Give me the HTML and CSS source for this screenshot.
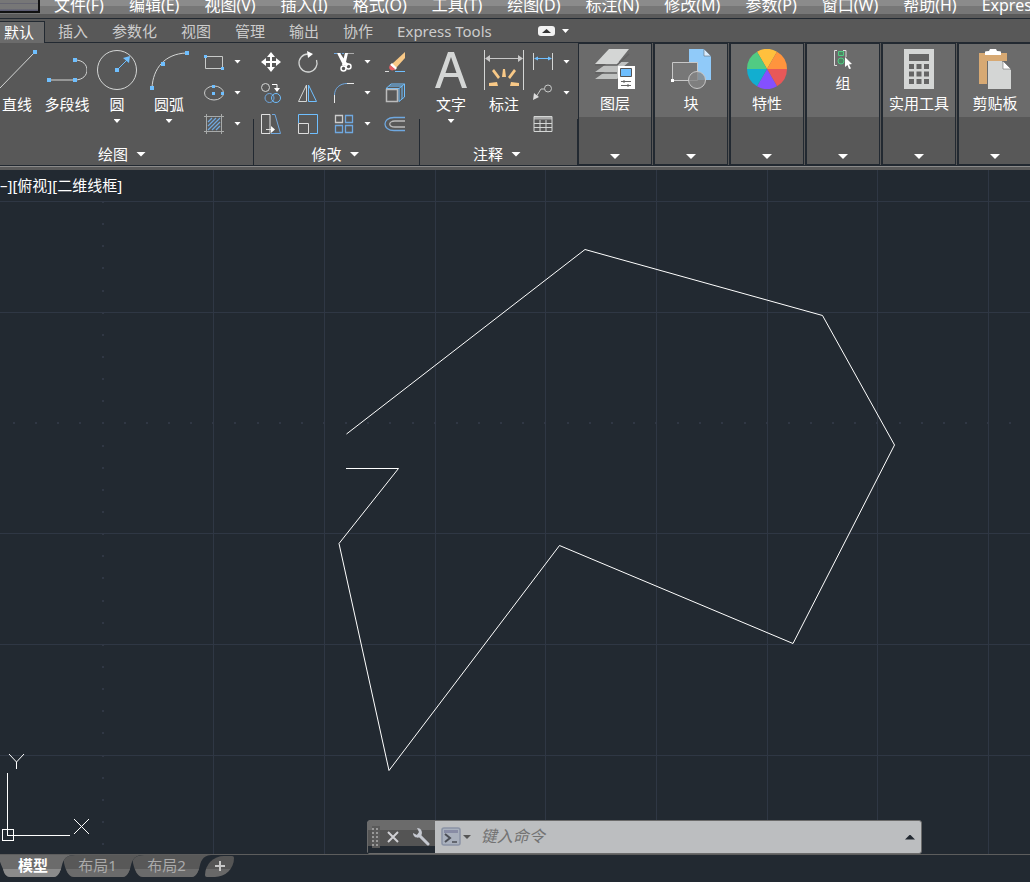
FILE: index.html
```html
<!DOCTYPE html>
<html lang="zh-CN">
<head>
<meta charset="utf-8">
<title>CAD</title>
<link rel="stylesheet" href="styles.css">
</head>
<body>
<div class="app">
  <nav class="menubar" aria-label="菜单">
    <span class="menu-edge"></span>
    <button>文件(F)</button><button>编辑(E)</button><button>视图(V)</button><button>插入(I)</button><button>格式(O)</button><button>工具(T)</button><button>绘图(D)</button><button>标注(N)</button><button>修改(M)</button><button>参数(P)</button><button>窗口(W)</button><button>帮助(H)</button><button>Express</button>
  </nav>
  <nav class="ribbon-tabs" aria-label="功能区选项卡">
    <button class="active">默认</button><button>插入</button><button>参数化</button><button>视图</button><button>管理</button><button>输出</button><button>协作</button><button>Express Tools</button>
    <button class="collapse" aria-label="最小化功能区"><svg width="31" height="12" viewBox="0 0 31 12"><rect x="0" y="1" width="17" height="10" rx="3" fill="#f2f2f2"/><path d="M4 8h9L8.500 4z" fill="#333"/><path d="M24 4h7l-3.500 4z" fill="#fff"/></svg></button>
  </nav>
  <div class="ribbon">
    <section class="panel draw">
      <div class="tools">
        <button class="large"><svg viewBox="0 0 40 40"><path d="M3 38L38 2" stroke="#d4d6d5"/><path d="M36 0h4v4h-4z" fill="#6fbfff"/></svg><span>直线</span></button>
        <button class="large"><svg viewBox="0 0 40 40"><path d="M2 30h26M28 10c8 0 12 5 12 10s-4 10-12 10" stroke="#d4d6d5"/><path d="M0 28h4v4H0zM26 28h4v4h-4zM26 8h4v4h-4z" fill="#6fbfff"/></svg><span>多段线</span></button>
        <button class="large"><svg viewBox="0 0 40 40"><circle cx="20" cy="20" r="19.500" stroke="#d4d6d5"/><path d="M20 20L31 9" stroke="#6fbfff"/><path d="M18 18h4v4h-4zM33 6l-1 7-6-5z" fill="#6fbfff"/></svg><span>圆</span><i class="caret"></i></button>
        <button class="large"><svg viewBox="0 0 40 40"><path d="M3 38C4 18 16 4 37 3" stroke="#d4d6d5"/><path d="M1 36h4v4H1zM12 12h4v4h-4zM36 1h4v4h-4z" fill="#6fbfff"/></svg><span>圆弧</span><i class="caret"></i></button>
        <div class="small-grid">
          <button aria-label="矩形"><svg viewBox="0 0 20 20"><path d="M1.500 4.500h17v12h-17z" stroke="#c8cac9"/><path d="M0 3h3v3H0zM17 15h3v3h-3z" fill="#6fbfff"/></svg></button><i class="caret"></i>
          <button aria-label="椭圆"><svg viewBox="0 0 20 20"><ellipse cx="10" cy="10" rx="9.500" ry="7" stroke="#c8cac9"/><path d="M8 2h3v3H8zM8 9h3v3H8zM17 9h3v3h-3z" fill="#6fbfff"/></svg></button><i class="caret"></i>
          <button aria-label="图案填充"><svg viewBox="0 0 20 20"><path d="M2.500 0v20M17.500 0v20M0 2.500h20M0 17.500h20" stroke="#a8aaa9"/><path d="M4 8l4-4M4 12l8-8M4 16L16 4M8 16l8-8M12 16l4-4" stroke="#6fa8e0" stroke-width="1.300"/></svg></button><i class="caret"></i>
        </div>
      </div>
      <button class="panel-title">绘图<i class="caret wide"></i></button>
    </section>
    <section class="panel modify">
      <div class="tools">
        <div class="small-grid">
          <button aria-label="移动"><svg viewBox="0 0 20 20"><path d="M10 3v14M3 10h14" stroke="#fff" stroke-width="2"/><path d="M10 0l4 5H6zM10 20l4-5H6zM0 10l5-4v8zM20 10l-5-4v8z" fill="#fff"/></svg></button>
          <button aria-label="旋转"><svg viewBox="0 0 20 20"><path d="M10 2a9 9 0 1 0 8.500 6" stroke="#d4d6d5" stroke-width="1.300"/><path d="M9 -1l6 3-5 4z" fill="#fff"/></svg></button>
          <button aria-label="修剪"><svg viewBox="0 0 20 20"><path d="M0 1.500h10" stroke="#6fa8e0" stroke-dasharray="3 1"/><path d="M13 1.500h7" stroke="#aaa"/><path d="M3 1l3 0 6 9 3 2-2 2-4-1zM11 1h3l-2 9-2 4-2-1z" fill="#fff"/><circle cx="9.500" cy="16.500" r="2.500" stroke="#fff" stroke-width="1.500"/><circle cx="14.500" cy="14.500" r="2.500" stroke="#fff" stroke-width="1.500"/></svg></button><i class="caret"></i>
          <button aria-label="删除"><svg viewBox="0 0 20 20"><path d="M0 19.500h4" stroke="#ddd"/><path d="M10 19.500h10" stroke="#6fbfff"/><path d="M7 12L20 0v6l-9 10z" fill="#f9c987"/><path d="M7 11l5 5-2 2-5-5z" fill="#fff"/><path d="M5 13l5 4c-2 3-8 1-5-4z" fill="#e85f62"/></svg></button>
          <button aria-label="复制"><svg viewBox="0 0 20 20"><circle cx="4.500" cy="4.500" r="4" stroke="#d4d6d5"/><path d="M11 1.500h5v4" stroke="#fff"/><path d="M13 5h6l-3 4z" fill="#fff"/><circle cx="8.500" cy="15" r="4.500" stroke="#6fa8e0"/><circle cx="15" cy="15" r="4.500" stroke="#6fbfff"/></svg></button>
          <button aria-label="镜像"><svg viewBox="0 0 20 20"><path d="M8.500 2v16.500h-8z" stroke="#d4d6d5"/><path d="M10.500 2v16.500h8z" stroke="#6fbfff"/></svg></button>
          <button aria-label="圆角"><svg viewBox="0 0 20 20"><path d="M.500 12v8M13 .500h7" stroke="#e8e8e8"/><path d="M.500 12C.500 5 6 .500 13 .500" stroke="#6fa8e0"/></svg></button><i class="caret"></i>
          <button aria-label="分解"><svg viewBox="0 0 20 20"><path d="M1 5.500L6 1h13.500v13L14 18.500M14 5.500L19.500 1M1 5.500h13v13M4 3h13v13" stroke="#6fbfff"/><path d="M1.500 6.500h11v12h-11z" stroke="#bbb" stroke-width="1.500"/></svg></button>
          <button aria-label="拉伸"><svg viewBox="0 0 20 20"><path d="M9 .500H.500v19H9zM5 15.500h7" stroke="#e0e0e0"/><path d="M10 12l4 3.500-4 3.500z" fill="#fff"/><path d="M11 .500h3l5.500 19H10" stroke="#6fa8e0"/></svg></button>
          <button aria-label="缩放"><svg viewBox="0 0 20 20"><path d="M.500 9V.500h19v19H12" stroke="#6fbfff"/><path d="M.500 9.500h10v10H.500z" stroke="#ddd"/></svg></button>
          <button aria-label="阵列"><svg viewBox="0 0 20 20"><path d="M1.500 1.500h7v7h-7z" stroke="#ccc" stroke-width="1.300"/><path d="M11.500 1.500h7v7h-7zM1.500 11.500h7v7h-7zM11.500 11.500h7v7h-7z" stroke="#6fa8e0" stroke-width="1.300"/></svg></button><i class="caret"></i>
          <button aria-label="偏移"><svg viewBox="0 0 20 20"><path d="M20 3.500H9C-3 3.500-3 16.500 9 16.500h11" stroke="#6fa8e0" stroke-width="1.300"/><path d="M20 7H10c-7 0-7 6 0 6h10" stroke="#bbb" stroke-width="1.300"/></svg></button>
        </div>
      </div>
      <button class="panel-title">修改<i class="caret wide"></i></button>
    </section>
    <section class="panel annotate">
      <div class="tools">
        <button class="large"><svg viewBox="0 0 40 40"><path d="M4 38L17 2h6l13 36h-5l-4-11H13L9 38zM14.500 23h11L20 7z" fill="#d4d6d5" fill-rule="evenodd"/></svg><span>文字</span><i class="caret"></i></button>
        <button class="large"><svg viewBox="0 0 40 40"><path d="M.500 0v40M39.500 0v40" stroke="#d4d6d5"/><path d="M2 8.500h36" stroke="#c8c8c8"/><path d="M1 8.500L6 5v7zM39 8.500L34 5v7z" fill="#c8c8c8"/><path d="M18 27l1-8h2l1 8zM8 21l2-2 6 8-2 2zM32 21l-2-2-6 8 2 2zM5 36v-3l8-1 1 4zM35 36v-3l-8-1-1 4z" fill="#f9c987"/></svg><span>标注</span></button>
        <div class="small-grid">
          <button aria-label="线性"><svg viewBox="0 0 20 20"><path d="M.500 1v17M19.500 1v17" stroke="#d4d6d5"/><path d="M2 6.500h16" stroke="#6fbfff"/><path d="M1 6.500l4-2v4zM19 6.500l-4-2v4z" fill="#6fbfff"/></svg></button><i class="caret"></i>
          <button aria-label="引线"><svg viewBox="0 0 20 20"><circle cx="15" cy="5.500" r="3.500" stroke="#c8cac9"/><path d="M11.500 6H8l-5 8" stroke="#c8cac9"/><path d="M0 17l1-7 5 4z" fill="#ddd"/></svg></button><i class="caret"></i>
          <button aria-label="表格"><svg viewBox="0 0 20 20"><path d="M1 4h18" stroke="#aaa" stroke-width="3"/><path d="M1 2.500h18v15H1zM1 9.500h18M1 13.500h18M7 6v12M13 6v12" stroke="#d4d6d5"/></svg></button>
        </div>
      </div>
      <button class="panel-title">注释<i class="caret wide"></i></button>
    </section>
    <section class="folded">
      <button class="face"><svg viewBox="0 0 40 40"><path d="M14 20h20L22 30H0zM14 13h20L22 23H0z" fill="#bfc1c0"/><path d="M14 0h20L22 15H0z" fill="#d4d6d5"/><path d="M0 16h22L34 5M0 24h22" stroke="#606060" stroke-width="1.500"/><path d="M23 17h17v23H23z" fill="#fff"/><path d="M25.500 19.500h11v8h-11z" fill="#6fbfff" stroke="#555"/><path d="M26 32.500h10M26 36.500h10M29 31v3M33 35v3" stroke="#666"/></svg><span>图层</span></button>
      <button class="more" aria-label="图层面板"><i class="caret wide"></i></button>
    </section>
    <section class="folded">
      <button class="face"><svg viewBox="0 0 40 40"><path d="M18 0h15l7 7v24H18z" fill="#90caf9"/><path d="M33 0v7h7z" fill="#d8ecff" stroke="#555" stroke-width=".500"/><path d="M1.500 13.500h25v18h-25z" fill="#777" stroke="#c8c8c8"/><circle cx="26" cy="31" r="8.500" fill="#858585" fill-opacity=".800" stroke="#c8c8c8"/><path d="M0 30h3v3H0z" fill="#fff"/></svg><span>块</span></button>
      <button class="more" aria-label="块面板"><i class="caret wide"></i></button>
    </section>
    <section class="folded">
      <button class="face"><svg viewBox="0 0 40 40"><path d="M20 20L10 2.700A20 20 0 0 1 30 2.700z" fill="#ffc03d"/><path d="M20 20L30 2.700A20 20 0 0 1 40 20z" fill="#ff943d"/><path d="M20 20h20a20 20 0 0 1-10 17.300z" fill="#e85858"/><path d="M20 20l10 17.300a20 20 0 0 1-20 0z" fill="#8450ff"/><path d="M20 20L10 37.300A20 20 0 0 1 0 20z" fill="#12aed0"/><path d="M20 20H0A20 20 0 0 1 10 2.700z" fill="#51cb83"/></svg><span>特性</span></button>
      <button class="more" aria-label="特性面板"><i class="caret wide"></i></button>
    </section>
    <section class="folded">
      <button class="face short"><svg viewBox="0 0 20 20"><path d="M4 1.500H1.500v15H4M10 1.500h3V8" stroke="#ddd"/><path d="M5.500 2.500h5v4h-5z" stroke="#51cb83" fill="#4c8562"/><circle cx="8" cy="12" r="3" stroke="#51cb83" fill="#4c8562"/><path d="M12 8l7 7-3 .500 2 4-2 .500-1.500-4L12 18z" fill="#fff"/></svg><span>组</span></button>
      <button class="more" aria-label="组面板"><i class="caret wide"></i></button>
    </section>
    <section class="folded">
      <button class="face"><svg viewBox="0 0 40 40"><path d="M5 0h30v40H5z" fill="#d4d6d5"/><path d="M10 5h20v7H10zM10 15h5v5h-5zM17.500 15h5v5h-5zM25 15h5v5h-5zM10 22.500h5v5h-5zM17.500 22.500h5v5h-5zM25 22.500h5v5h-5zM10 30h5v5h-5zM17.500 30h5v5h-5zM25 30h5v5h-5z" fill="#656565"/></svg><span>实用工具</span></button>
      <button class="more" aria-label="实用工具面板"><i class="caret wide"></i></button>
    </section>
    <section class="folded">
      <button class="face"><svg viewBox="0 0 40 40"><path d="M4 4h28v8H12v23H4z" fill="#d7a973"/><path d="M10 6V3q0-1 4-1l1-2h6l1 2q4 0 4 1v3z" fill="#fff"/><path d="M13 12h14l9 9v19H13z" fill="#d4d6d5"/><path d="M28 12v8h8z" fill="#fff" stroke="#555" stroke-width=".500"/></svg><span>剪贴板</span></button>
      <button class="more" aria-label="剪贴板面板"><i class="caret wide"></i></button>
    </section>
  </div>
  <main class="canvas">
    <svg class="drawing" shape-rendering="crispEdges">
      <path d="M213.500 0v684M324.500 0v684M435.500 0v684M545.500 0v684M656.500 0v684M767.500 0v684M877.500 0v684M988.500 0v684M0 31.500h1030M0 142.500h1030M0 363.500h1030M0 474.500h1030M0 585.500h1030" stroke="#2f3744"/>
      <path d="M13 253h1017M103 31v653" stroke="#303744" stroke-width="2" stroke-dasharray="2 20.140"/>
      <g stroke="#fff" fill="none" shape-rendering="geometricPrecision">
        <path d="M346.500 264L585 79.500 822.500 145.500 894.500 275 793 473.500 559.500 375.500 389 600.500 339 373.500 398.500 298.500H346"/>
      </g>
      <path d="M7.500 603v62H70M2.500 659.500h11v11h-11z" stroke="#fff" fill="none"/>
      <path d="M9 584l7.500 8 7.500-8M16.500 592v7M74 649l15 15M89 649l-15 15" stroke="#fff" fill="none" shape-rendering="geometricPrecision"/>
    </svg>
    <div class="view-label"><span>–][俯视][二维线框]</span></div>
    <form class="command">
      <div class="command-tools">
        <span class="grip"></span>
        <button type="button" aria-label="关闭"><svg width="12" height="12" viewBox="0 0 12 12"><path d="M1 1l10 10M11 1L1 11" stroke="#d0d0d4" stroke-width="2"/></svg></button>
        <button type="button" aria-label="自定义"><svg width="18" height="18" viewBox="0 0 18 18"><path d="M7 7l9 9" stroke="#c5c8d0" stroke-width="3" stroke-linecap="round"/><path d="M5 0c5 0 6 5 4 8-2 3-8 2-8-3l4 2 2-3z" fill="#c5c8d0"/></svg></button>
      </div>
      <button type="button" class="prompt" aria-label="最近使用的命令"><svg width="30" height="20" viewBox="0 0 30 20"><rect x="1" y="1" width="18" height="17" rx="2" fill="#a9b0bd" stroke="#8a93a5" stroke-width="1.500"/><path d="M3 3h14v3H3z" fill="#888ca5"/><path d="M4 7l5 4-5 4" stroke="#4b4e55" stroke-width="2"/><path d="M11 15h5" stroke="#4b4e55" stroke-width="1.500"/><path d="M22 8h8l-4 4z" fill="#555"/></svg></button>
      <input type="text" placeholder="键入命令" aria-label="键入命令">
      <button type="button" class="history" aria-label="历史记录"><i class="caret wide up"></i></button>
    </form>
  </main>
  <nav class="layouts" aria-label="布局">
    <button class="active"><svg viewBox="0 0 80 22" preserveAspectRatio="none"><path class="tab-top" d="M0 0C6 3 6 8 9 14Q11 22 16 22H60Q64 22 67 14C69 6 70 1 79 0z"/><path class="tab-low" d="M9 14Q11 22 16 22H60Q64 22 67 14z"/></svg><span>模型</span></button>
    <button><svg viewBox="0 0 80 22" preserveAspectRatio="none"><path class="tab-top" d="M12 0C4 0 0 4 1 8Q4 22 11 22H60Q64 22 67 14C69 6 70 1 79 0z"/><path class="tab-low" d="M3 14Q6 22 11 22H60Q64 22 67 14z"/></svg><span>布局1</span></button>
    <button><svg viewBox="0 0 80 22" preserveAspectRatio="none"><path class="tab-top" d="M12 0C4 0 0 4 1 8Q4 22 11 22H60Q64 22 67 14C69 6 70 1 79 0z"/><path class="tab-low" d="M3 14Q6 22 11 22H60Q64 22 67 14z"/></svg><span>布局2</span></button>
    <button class="add" aria-label="新建布局"><svg viewBox="0 0 10 10"><path d="M5 0v10M0 5h10" stroke="#c8c8c8" stroke-width="2"/></svg></button>
  </nav>
</div>
</body>
</html>
```
FILE: styles.css
```css
* { box-sizing: border-box; }
body {
  margin: 0;
  background: #222931;
  color: #fff;
  font: 15px/20px "Noto Sans", "Noto Sans CJK SC", sans-serif;
}
button {
  margin: 0;
  padding: 0;
  border: 0;
  background: none;
  color: inherit;
  font: inherit;
  white-space: nowrap;
}
svg { display: block; fill: none; flex: none; }
.app {
  display: flex;
  flex-direction: column;
  height: 100vh;
  overflow: hidden;
}
.menubar {
  display: flex;
  gap: 25px;
  height: 19px;
  flex: none;
  overflow: hidden;
  background: linear-gradient(#8b8b8b 6px, #777 6px, #777 14px, #5a5a5a 14px);
  border-bottom: 1px solid #222931;
}
.menubar button { height: 10px; font-size: 16px; line-height: 10px; flex: none; }
.menu-edge {
  width: 40px;
  height: 13px;
  margin-right: -11px;
  flex: none;
  background: linear-gradient(#777 3px, #55556a 3px, #777 4px, #777 9px, #5a5a70 10px);
  border-right: 2px solid #111;
  border-bottom: 2px solid #111;
}
.ribbon-tabs {
  display: flex;
  height: 24px;
  flex: none;
  padding-top: 2px;
  background: #585858;
  border-bottom: 1px solid #222931;
  color: #ccc;
}
.ribbon-tabs button { height: 20px; line-height: 20px; padding: 0 12px; }
.ribbon-tabs .active {
  height: 22px;
  padding: 0 10px 2px 4px;
  margin-right: 1px;
  background: #6b6b6b;
  border-top: 1px solid #222931;
  border-right: 1px solid #222931;
  color: #fff;
}
.ribbon-tabs .collapse { padding: 0 34px; }
.ribbon {
  display: flex;
  height: 123px;
  flex: none;
  overflow: hidden;
  border-bottom: 1px solid #222931;
}
.panel {
  display: flex;
  flex-direction: column;
  flex: none;
  position: relative;
  background: #585858;
}
.panel::after {
  content: "";
  position: absolute;
  right: 0;
  bottom: 0;
  width: 1px;
  height: 46px;
  background: #222931;
}
.tools { display: flex; flex: 1; padding-top: 3px; }
.large {
  display: flex;
  flex-direction: column;
  align-items: center;
  padding-top: 4px;
  flex: none;
}
.large svg { width: 40px; height: 40px; }
.large span { margin: 4px 0 5px; }
.draw .large { width: 34px; }
.draw .large:nth-child(2) { width: 66px; }
.draw .large:nth-child(4) { width: 70px; }
.annotate .large { width: 62px; }
.annotate .large:nth-child(2) { width: 44px; margin-right: 7px; }
.draw { width: 254px; }
.modify { width: 166px; padding-left: 7px; }
.annotate { width: 158px; }
.small-grid {
  display: grid;
  grid-template-columns: 30px 8px;
  grid-auto-rows: 31px;
  align-items: center;
  align-content: start;
}
.modify .small-grid { grid-template-columns: 37px 36px 30px 21px 20px; }
.small-grid svg { width: 20px; height: 20px; overflow: visible; }
.caret {
  display: block;
  width: 7px;
  height: 4px;
  background: #fff;
  clip-path: polygon(0 0, 100% 0, 50% 100%);
  flex: none;
}
.caret.wide { width: 10px; height: 5px; }
.caret.up { background: #222931; clip-path: polygon(50% 0, 100% 100%, 0 100%); }
.panel-title {
  display: flex;
  align-items: center;
  justify-content: center;
  gap: 8px;
  height: 22px;
  padding-right: 10px;
}
.annotate .panel-title { padding-right: 4px; }
.folded {
  display: flex;
  flex-direction: column;
  flex: none;
  width: 76px;
  padding: 1px 2px 1px 1px;
  border-right: 1px solid #222931;
  background: linear-gradient(90deg, #222931 74px, #585858 74px);
}
.face {
  display: flex;
  flex-direction: column;
  align-items: center;
  height: 73px;
  padding-top: 5px;
  background: #6b6b6b;
}
.face svg { width: 40px; height: 40px; }
.face.short svg { width: 20px; height: 20px; }
.face span { margin-top: 4px; }
.more {
  display: flex;
  flex: 1;
  align-items: flex-end;
  justify-content: center;
  padding-bottom: 5px;
  background: #585858;
}
.canvas {
  flex: 1;
  min-height: 0;
  position: relative;
  border-top: 4px solid #5a5a5a;
  border-bottom: 1px solid #5d5d5d;
}
.canvas::before {
  content: "";
  position: absolute;
  inset: -4px 0 auto;
  height: 1px;
  background: #8a8a8a;
}
.drawing { position: absolute; inset: 0; width: 100%; height: 100%; }
.view-label { position: absolute; left: 0; top: 5px; }
.command {
  position: absolute;
  left: 36%;
  right: 10%;
  bottom: 0;
  display: flex;
  align-items: center;
  height: 34px;
  margin: 0 5px 0 -4px;
  background: #bcbec0;
  border: 1px solid #6b6b6b;
  border-radius: 3px;
}
.command-tools {
  display: flex;
  align-items: center;
  justify-content: space-between;
  align-self: stretch;
  width: 67px;
  padding: 0 5px 0 4px;
  background: linear-gradient(#6b6b6b 9px, #545454 9px, #545454 25px, #222931 25px);
}
.grip {
  width: 8px;
  height: 22px;
  margin-right: -6px;
  background: repeating-linear-gradient(#5a5a5a 0 2px, transparent 2px 4px), repeating-linear-gradient(90deg, #999 0 2px, #5a5a5a 2px 4px);
}
.prompt { padding: 0 10px 0 6px; }
.command input {
  flex: 1;
  min-width: 0;
  height: 28px;
  padding: 0 0 2px;
  border: 0;
  outline: 0;
  background: none;
  color: #333;
  font: italic 16px/24px "Noto Sans", "Noto Sans CJK SC", sans-serif;
}
.command input::placeholder { color: #737373; opacity: 1; }
.history { padding: 6px; }
.layouts { display: flex; height: 27px; flex: none; color: #aaa; }
.layouts button { position: relative; width: 69px; height: 22px; padding-bottom: 2px; }
.layouts svg { position: absolute; left: 0; top: 0; width: 80px; height: 22px; }
.layouts span { position: relative; }
.layouts .active { width: 63px; padding-left: 3px; color: #fff; font-weight: 700; z-index: 1; }
.layouts .active svg { left: -6px; }
.tab-top { fill: #585858; }
.tab-low { fill: #6b6b6b; }
.active .tab-top { fill: #6b6b6b; }
.active .tab-low { fill: #8b8b8b; }
.layouts .add {
  width: 29px;
  height: 21px;
  margin: 1px 0 0 4px;
  border-radius: 20px 2px 20px 2px;
  background: linear-gradient(#555 13px, #686868 13px);
}
.layouts .add svg { left: 10px; top: 5px; width: 10px; height: 10px; }
```
